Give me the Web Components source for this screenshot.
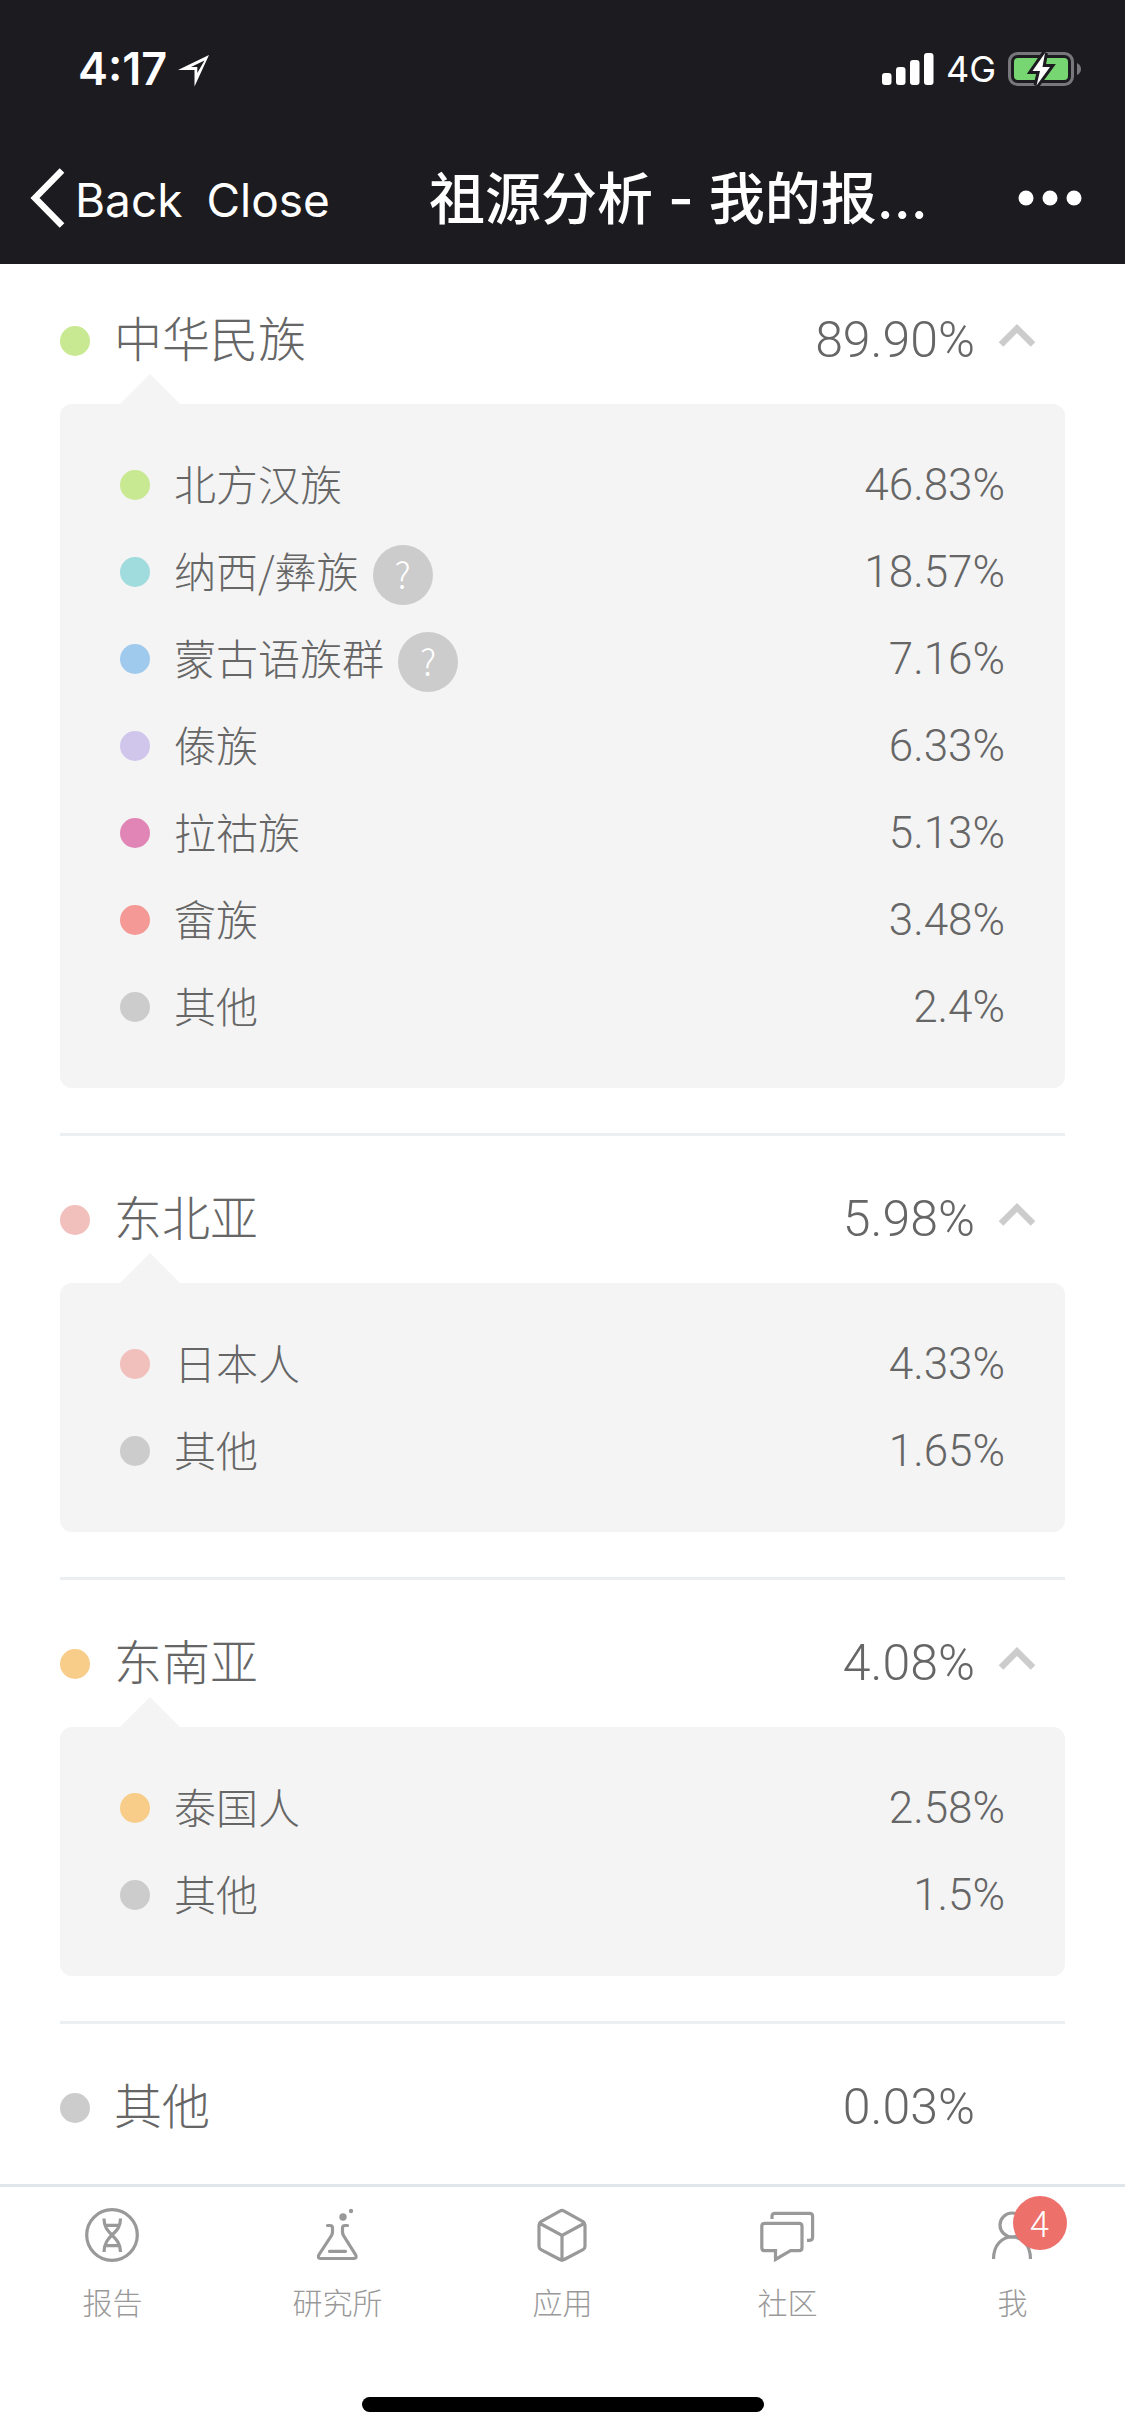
<!DOCTYPE html>
<html lang="zh-CN">
<head>
<meta charset="utf-8">
<meta name="viewport" content="width=device-width, initial-scale=1">
<title>祖源分析 - 我的报告</title>
<style>
  html, body { margin: 0; }
  body {
    --ui: Inter, "Noto Sans CJK SC", sans-serif;
    --cjk: "Noto Sans CJK SC", sans-serif;
    --num: Roboto, "Liberation Sans", sans-serif;
    --ink: #666;
    --panel: #f4f4f4;
    min-height: 100vh;
    display: flex;
    flex-direction: column;
    background: #fff;
    color: var(--ink);
    font-family: var(--cjk);
    font-weight: 300;
  }
  main { flex: 1; padding: 0 60px; }
</style>
</head>
<body>
<status-bar time="4:17" network="4G"></status-bar>
<nav-bar>祖源分析 - 我的报…</nav-bar>
<main>
  <ancestry-group class="first" name="中华民族" value="89.90%" color="#c8e891" open>
    <ancestry-item color="#c8e891" value="46.83%">北方汉族</ancestry-item>
    <ancestry-item color="#a0dbde" value="18.57%" help>纳西/彝族</ancestry-item>
    <ancestry-item color="#9fcaee" value="7.16%" help>蒙古语族群</ancestry-item>
    <ancestry-item color="#d0c5ea" value="6.33%">傣族</ancestry-item>
    <ancestry-item color="#e085b6" value="5.13%">拉祜族</ancestry-item>
    <ancestry-item color="#f49995" value="3.48%">畲族</ancestry-item>
    <ancestry-item color="#ccc" value="2.4%">其他</ancestry-item>
  </ancestry-group>
  <ancestry-group name="东北亚" value="5.98%" color="#f1bfbc" open>
    <ancestry-item color="#f1bfbc" value="4.33%">日本人</ancestry-item>
    <ancestry-item color="#ccc" value="1.65%">其他</ancestry-item>
  </ancestry-group>
  <ancestry-group name="东南亚" value="4.08%" color="#f8cd8a" open>
    <ancestry-item color="#f8cd8a" value="2.58%">泰国人</ancestry-item>
    <ancestry-item color="#ccc" value="1.5%">其他</ancestry-item>
  </ancestry-group>
  <ancestry-group name="其他" value="0.03%" color="#ccc"></ancestry-group>
</main>
<tab-bar>
  <tab-item icon="report">报告</tab-item>
  <tab-item icon="lab">研究所</tab-item>
  <tab-item icon="apps">应用</tab-item>
  <tab-item icon="community">社区</tab-item>
  <tab-item icon="me" badge="4">我</tab-item>
</tab-bar>
<script>
const attach = (host, html) => { host.attachShadow({ mode: 'open' }).innerHTML = html; };

customElements.define('status-bar', class extends HTMLElement {
  connectedCallback() {
    attach(this, `
      <style>
        :host { display: flex; align-items: center; box-sizing: border-box; height: 132px;
          padding: 6px 44px 0 78px; background: #1c1b1f; color: #fff; font-family: var(--ui); }
        svg { display: block; }
        .time { font-size: 45px; line-height: 48px; font-weight: 600; }
        .arrow { margin: 4px 0 0 10px; flex: 1; }
        .right { display: flex; align-items: center; gap: 12px; }
        .net { font-size: 36px; line-height: 48px; font-weight: 400; }
      </style>
      <span class="time">${this.getAttribute('time')}</span>
      <span class="arrow"><svg width="34" height="34" viewBox="0 0 34 34" fill="#fff" fill-rule="evenodd"><path d="M32 1 1 16H17.500V32.500ZM27.500 6.500 14 13H20.300V19Z"/></svg></span>
      <span class="right">
        <svg width="52" height="32" viewBox="0 0 52 32" fill="#fff"><rect y="20" width="9.500" height="12" rx="3"/><rect x="14" y="14" width="9.500" height="18" rx="3"/><rect x="28" y="7" width="9.500" height="25" rx="3"/><rect x="42" width="9.500" height="32" rx="3"/></svg>
        <span class="net">${this.getAttribute('network')}</span>
        <svg width="73" height="36" viewBox="0 0 73 36"><rect x="1.500" y="2.500" width="63" height="31" rx="8" fill="none" stroke="#78777b" stroke-width="3"/><path d="M69 12q4 2 4 6t-4 6z" fill="#78777b"/><rect x="6" y="7" width="54" height="22" rx="4" fill="#77d672"/><path d="M37 2 24.500 20H32L28.500 34.500 42 16H34.500Z" fill="#fff" stroke="#1c1b1f" stroke-width="6" paint-order="stroke"/></svg>
      </span>`);
  }
});

customElements.define('nav-bar', class extends HTMLElement {
  connectedCallback() {
    attach(this, `
      <style>
        :host { display: flex; align-items: center; box-sizing: border-box; height: 132px;
          padding: 0 43px 0 30px; background: #1c1b1f; color: #fff; font-family: var(--ui); }
        button { display: flex; align-items: center; border: 0; padding: 0; background: none; color: inherit;
          font: 400 46px/60px var(--ui); }
        button span { padding-top: 4px; }
        svg { display: block; }
        .back { gap: 9px; }
        .close { margin-left: 24px; }
        h1 { flex: 1; min-width: 0; margin: 0; padding: 2px 0 0 9px; text-align: center; white-space: nowrap;
          font-size: 56px; line-height: 80px; font-weight: 500; }
      </style>
      <button class="back" type="button"><svg width="36" height="60" viewBox="0 0 36 60" fill="none" stroke="#fff" stroke-width="6.500"><path d="M32 2.500 5 30l27 27.500"/></svg><span>Back</span></button>
      <button class="close" type="button"><span>Close</span></button>
      <h1><slot></slot></h1>
      <button type="button" aria-label="More"><svg width="64" height="16" viewBox="0 0 64 16" fill="#fff"><circle cx="8" cy="8" r="7.500"/><circle cx="32" cy="8" r="7.500"/><circle cx="56" cy="8" r="7.500"/></svg></button>`);
  }
});

customElements.define('ancestry-group', class extends HTMLElement {
  connectedCallback() {
    const open = this.hasAttribute('open');
    const chevron = open ? '<svg width="38" height="25" viewBox="0 0 38 25" fill="none" stroke="#ccc" stroke-width="6.500"><path d="M3 21.500 19 5.500l16 16"/></svg>' : '';
    attach(this, `
      <style>
        :host { display: block; }
        h2 { margin: 0; font: inherit; }
        .head { display: flex; align-items: center; box-sizing: border-box; width: 100%; height: 147px;
          padding: 60px 29px 39px 0; border: 0; background: none; color: inherit; text-align: left;
          font: 300 48px/48px var(--cjk); }
        :host(.first) .head { height: 140px; padding-top: 53px; }
        .dot { width: 30px; height: 30px; border-radius: 50%; margin-right: 24px; background: ${this.getAttribute('color')}; }
        .name { flex: 1; padding-bottom: 10px; }
        .value { padding-bottom: 2px; font-family: var(--num); font-size: 50px; }
        .mark { width: 38px; margin-left: 23px; padding-bottom: 12px; }
        .mark svg { display: block; }
        .panel { position: relative; display: flex; flex-direction: column; gap: 45px; padding: 60px;
          border-radius: 12px; background: var(--panel); }
        .panel::before { content: ""; position: absolute; left: 60px; bottom: 100%;
          border: 30px solid transparent; border-top-width: 0; border-bottom-color: var(--panel); }
        .rule { height: 3px; margin-top: 45px; background: #ebeff2; }
      </style>
      <h2><button class="head" type="button" aria-expanded="${open}"><span class="dot"></span><span class="name">${this.getAttribute('name')}</span><span class="value">${this.getAttribute('value')}</span><span class="mark">${chevron}</span></button></h2>
      ${open ? '<div class="panel"><slot></slot></div><div class="rule"></div>' : ''}`);
    const button = this.shadowRoot.querySelector('button');
    const panel = this.shadowRoot.querySelector('.panel');
    if (panel) button.addEventListener('click', () => {
      const shown = panel.style.display !== 'none';
      panel.style.display = shown ? 'none' : '';
      button.setAttribute('aria-expanded', String(!shown));
    });
  }
});

customElements.define('ancestry-item', class extends HTMLElement {
  connectedCallback() {
    attach(this, `
      <style>
        :host { display: flex; align-items: center; height: 42px; font-size: 42px; line-height: 42px; }
        .dot { width: 30px; height: 30px; border-radius: 50%; margin-right: 24px; background: ${this.getAttribute('color')}; }
        .name { padding-bottom: 5px; }
        button { width: 60px; height: 60px; margin: 6px 0 0 14px; padding: 0 0 4px; border: 0; border-radius: 50%;
          background: #ccc; color: #fff; font: 300 36px/56px var(--cjk); }
        .value { margin-left: auto; font-family: var(--num); font-size: 44px; }
      </style>
      <span class="dot"></span><span class="name"><slot></slot></span>${this.hasAttribute('help') ? '<button type="button">?</button>' : ''}<span class="value">${this.getAttribute('value')}</span>`);
  }
});

customElements.define('tab-bar', class extends HTMLElement {
  connectedCallback() {
    attach(this, `
      <style>
        :host { display: flex; flex-direction: column; box-sizing: border-box; height: 252px;
          border-top: 3px solid #e1e6ea; padding: 21px 0 24px; background: #fff; }
        nav { display: flex; }
        .home { width: 402px; height: 15px; margin: auto auto 0; border-radius: 8px; background: #000; }
      </style>
      <nav><slot></slot></nav><div class="home"></div>`);
  }
});

const icons = {
  report: '<circle cx="27" cy="27" r="25.300"/><path d="M19 10.500C19 20 23.500 23.500 27 27s8.500 8 8.500 17M35.500 10.500C35.500 20 30.500 23.500 27 27s-8 8-8 17M20.500 17.300h13M20.500 37.700h13"/>',
  lab: '<path stroke-linecap="round" d="M17.500 17.500h2.500q2.500 0 2.500 2.500v4q0 1.500-1 3.500L8.800 47q-1.500 3.500 1.700 3.500h33.500q3.200 0 1.700-3.500L33.500 27.500q-1-2-1-3.500v-4q0-2.500 2.500-2.500h2.500M19.500 43.300h16"/><g fill="#999" stroke="none"><circle cx="33" cy="9" r="3.700"/><circle cx="41" cy="3" r="2.200"/></g>',
  apps: '<path d="M24.800 3.200q2.200-1.500 4.400 0L48 13.700q2 1.200 2 3.500v21q0 2.300-2 3.500L29.200 51.500q-2.200 1.500-4.400 0L6 41.700q-2-1.200-2-3.500v-21q0-2.300 2-3.500ZM5 15.500l22 12 22-12M27 27.500V52"/>',
  community: '<path d="M4.800 15.300h34.200q3 0 3 3v21.400q0 3-3 3h-8.400L15.500 51.500v-8.800H4.800q-3 0-3-3V18.300q0-3 3-3ZM12 11V8.300q0-3 3-3h34.600q3 0 3 3v21q0 3-3 3H47"/>',
  me: '<circle cx="27" cy="17" r="12"/><path d="M8.500 51C8.500 37 17 29 27 29s18.500 8 18.500 22"/>'
};

customElements.define('tab-item', class extends HTMLElement {
  connectedCallback() {
    const badge = this.getAttribute('badge');
    attach(this, `
      <style>
        :host { display: block; flex: 1; }
        a { display: flex; flex-direction: column; align-items: center; gap: 24px; color: #999;
          text-decoration: none; font-size: 30px; line-height: 30px; }
        .icon { position: relative; width: 54px; height: 54px; padding-right: 1px; }
        svg { display: block; overflow: visible; }
        .badge { position: absolute; left: 28px; top: -12px; width: 54px; height: 54px; border-radius: 50%;
          background: #ed706b; color: #fff; text-align: center; font-size: 36px; line-height: 50px; }
      </style>
      <a href="#"><span class="icon"><svg width="54" height="54" viewBox="0 0 54 54" fill="none" stroke="#999" stroke-width="3.200">${icons[this.getAttribute('icon')]}</svg>${badge ? `<span class="badge">${badge}</span>` : ''}</span><span><slot></slot></span></a>`);
  }
});
</script>
</body>
</html>
